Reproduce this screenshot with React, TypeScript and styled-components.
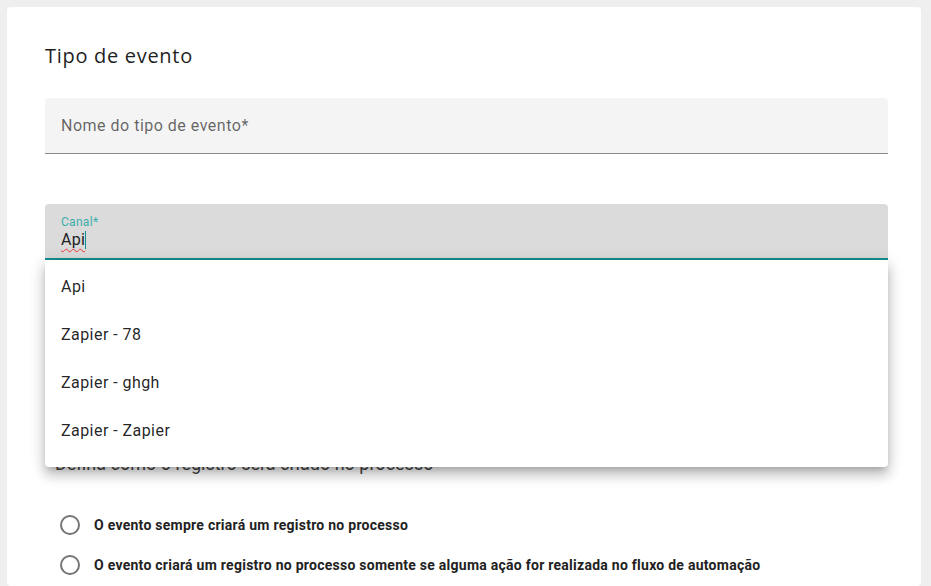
import styled, { createGlobalStyle } from "styled-components";

const GlobalStyle = createGlobalStyle`
  html, body {
    margin: 0;
    background: #efefef;
    overflow: hidden;
  }
  body {
    font-family: Roboto, "Liberation Sans", sans-serif;
  }
`;

const Page = styled.div`
  height: 586px;
  padding: 7px 10px 0 7px;
  box-sizing: border-box;
`;

const Card = styled.div`
  background: #fff;
  border-radius: 4px;
  height: 100%;
  padding: 33px 33px 0 38px;
  box-sizing: border-box;
`;

const Title = styled.h1`
  margin: 4px 0 0;
  font-family: "Open Sans", "Noto Sans", sans-serif;
  font-weight: 400;
  font-size: 20px;
  line-height: 24px;
  letter-spacing: 0.7px;
  color: #1f1f1f;
`;

const FieldSlot = styled.div<{ $gap: number }>`
  margin-top: ${p => p.$gap}px;
`;

const Field = styled.div<{ $focused?: boolean }>`
  position: relative;
  height: 56px;
  box-sizing: border-box;
  border-radius: 4px 4px 0 0;
  background: ${p => (p.$focused ? "#dbdbdb" : "#f4f4f4")};
  border-bottom: ${p => (p.$focused ? "2px solid #12908e" : "1px solid #8a8a8a")};
  padding: 0 16px;
  display: flex;
  flex-direction: column;
  justify-content: center;
`;

const Placeholder = styled.span`
  font-size: 16px;
  letter-spacing: 0.5px;
  color: rgba(0, 0, 0, 0.6);
`;

const FloatLabel = styled.span`
  font-size: 12px;
  line-height: 14px;
  letter-spacing: 0.3px;
  color: #3aaeab;
  margin-top: 4px;
`;

const Value = styled.span`
  font-size: 16px;
  line-height: 22px;
  letter-spacing: 0.3px;
  color: #222;
  display: flex;
  align-items: center;
`;

const Typed = styled.span`
  text-decoration: underline wavy #e53935;
  text-decoration-thickness: 1px;
  text-underline-offset: 3px;
`;

const Caret = styled.span`
  width: 1px;
  height: 18px;
  background: #12908e;
`;

const Menu = styled.ul`
  position: absolute;
  top: 100%;
  left: 0;
  right: 0;
  margin: 2px 0 0;
  list-style: none;
  padding: 2px 0 13px;
  background: #fff;
  border-radius: 0 0 4px 4px;
  box-shadow: 0 5px 6px -3px rgba(0, 0, 0, 0.2), 0 9px 12px 1px rgba(0, 0, 0, 0.14),
    0 3px 16px 2px rgba(0, 0, 0, 0.12);
  z-index: 2;
`;

const Option = styled.li`
  height: 48px;
  display: flex;
  align-items: center;
  padding: 0 16px;
  font-size: 16px;
  letter-spacing: 0.45px;
  color: rgba(0, 0, 0, 0.87);
`;

const Section = styled.div`
  margin-top: 192px;
`;

const SectionText = styled.p`
  margin: 0 0 0 10px;
  font-size: 18px;
  line-height: 24px;
  color: #444;
`;

const RadioList = styled.div`
  margin-top: 39px;
  padding-left: 15px;
  display: flex;
  flex-direction: column;
  gap: 20px;
`;

const RadioRow = styled.label`
  display: flex;
  align-items: center;
  gap: 14px;
  height: 20px;
`;

const RadioCircle = styled.span`
  width: 20px;
  height: 20px;
  box-sizing: border-box;
  border: 2px solid #757575;
  border-radius: 50%;
`;

const RadioText = styled.span`
  font-size: 14px;
  font-weight: 700;
  letter-spacing: 0.26px;
  color: #222;
`;

const options = ["Api", "Zapier - 78", "Zapier - ghgh", "Zapier - Zapier"];

const radios = [
  "O evento sempre criará um registro no processo",
  "O evento criará um registro no processo somente se alguma ação for realizada no fluxo de automação",
];

export default function App() {
  return (
    <>
      <GlobalStyle />
      <Page>
        <Card>
          <Title>Tipo de evento</Title>
          <FieldSlot $gap={30}>
            <Field>
              <Placeholder>Nome do tipo de evento*</Placeholder>
            </Field>
          </FieldSlot>
          <FieldSlot $gap={50}>
            <Field $focused>
              <FloatLabel>Canal*</FloatLabel>
              <Value>
                <Typed>Api</Typed>
                <Caret />
              </Value>
              <Menu>
                {options.map(o => (
                  <Option key={o}>{o}</Option>
                ))}
              </Menu>
            </Field>
          </FieldSlot>
          <Section>
            <SectionText>Defina como o registro será criado no processo</SectionText>
            <RadioList>
              {radios.map(r => (
                <RadioRow key={r}>
                  <RadioCircle />
                  <RadioText>{r}</RadioText>
                </RadioRow>
              ))}
            </RadioList>
          </Section>
        </Card>
      </Page>
    </>
  );
}
